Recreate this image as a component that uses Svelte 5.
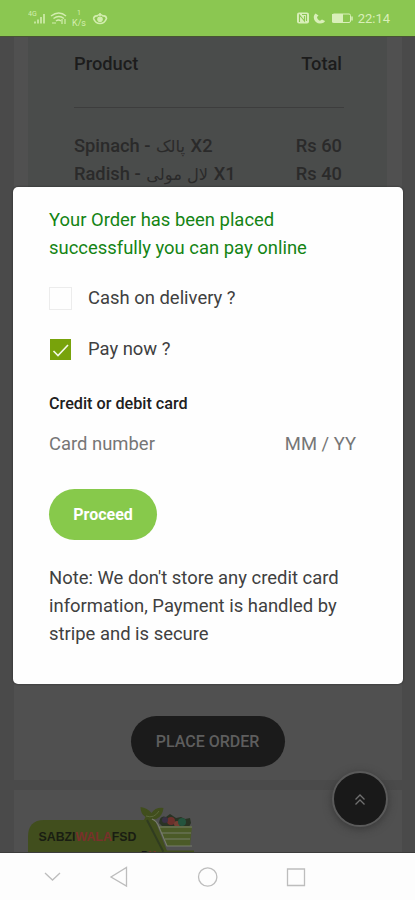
<script>
  const items = [
    { name: 'Spinach', local: 'پالک', qty: 'X2', total: 'Rs 60' },
    { name: 'Radish', local: 'لال مولی', qty: 'X1', total: 'Rs 40' }
  ];
  let method = $state('card');
</script>

<div class="phone">
  <header class="status">
    <svg class="signals" width="82" height="20" viewBox="0 0 82 20" fill="none" stroke="#d3edaf" stroke-width="1.2">
      <text x="0" y="8" class="net">4G</text>
      <path d="M7 15.500v-2M10 15.500v-4M13 15.500V9M16 15.500V6" stroke-width="1.600" />
      <path d="M23 8q8-6 15 0M25.500 10.500q5.500-4 10.500 0M28 13q2.500-2 5 0" stroke-width="1.500" />
      <path d="M24 15h4M34 11v5M37 16v-5" />
      <text x="49" y="7" class="net">1</text>
      <text x="44" y="18" class="rate">K/s</text>
      <path d="M65.500 10.500q1-3 3.500-2.500q3-3 6 0q3-.500 3.500 2.500q-2 5-6.500 5t-6.500-5M72 5v3" stroke-width="1.600" />
      <circle cx="72" cy="11.200" r="2.200" fill="#d3edaf" />
    </svg>
    <div class="right">
      <svg width="57" height="14" viewBox="0 0 57 14">
        <rect x="0" y="1.500" width="12" height="11" rx="2" fill="#d9efb9" />
        <path d="M2.500 11V4l5 6V5M5 3.500h4.500V10" fill="none" stroke="#8bc751" stroke-width="1.100" />
        <path d="M18.500 2.500C15 5 17 12.500 23 12.500c3 0 4.500-1 5-2.500l-3-1.500-2 1.300C21.500 9.500 20 7.500 20 6l1.500-1.500Z" fill="#d9efb9" />
        <rect x="35.500" y="3" width="18" height="8.500" rx="1.500" fill="none" stroke="#d9efb9" />
        <rect x="35" y="3" width="11" height="8.500" fill="#d9efb9" />
        <path d="M55 5.500v4" stroke="#d9efb9" stroke-width="1.500" />
      </svg>
      <span>22:14</span>
    </div>
  </header>

  <main class="page">
    <section class="order">
      <div class="summary">
        <div class="row head"><span>Product</span><span>Total</span></div>
        <hr />
        {#each items as item}
          <div class="row"><span>{item.name} - <bdi class="urdu">{item.local}</bdi> {item.qty}</span><span>{item.total}</span></div>
        {/each}
      </div>
      <button class="place">PLACE ORDER</button>
    </section>

    <section class="brand">
      <svg width="172" height="50" viewBox="0 0 172 50">
        <path d="M0 50V31Q0 14 16 14H127L141 50Z" fill="#414e1d" />
        <text x="10.500" y="35" class="logo" textLength="98" lengthAdjust="spacingAndGlyphs">SABZI<tspan fill="#79302b">WALA</tspan>FSD</text>
        <path d="M112.500 1q7 1 11 6q4-6 12-5q-1 8-7 11l-13 2 2-4q-5-3-5-10Z" fill="#414e1d" />
        <path d="M118 10q8 3 13-5" fill="none" stroke="#5b683b" />
        <path d="M131 17q1-8 7-6l4-3 6 4 5-1 4 2 5-1 1 5-2 4h-26Z" fill="#293324" />
        <circle cx="143" cy="15" r="4" fill="#6c302b" /><circle cx="149" cy="18" r="3" fill="#743f32" />
        <circle cx="154" cy="16" r="4" fill="#24533d" /><circle cx="137" cy="14" r="3" fill="#383044" />
        <path d="M130 20h34l-2 20h-23Z" fill="#4b5a27" />
        <path d="M124 13q5 2 7 8l8 19h25M131 21h33M134 27h29M137 33h25" fill="none" stroke="#777d6b" stroke-width="1.200" />
        <path d="M119 14l17 33" stroke="#303c20" stroke-width="2" />
        <path d="M112 50v-2h54v2Z" fill="#505050" />
        <path d="M133 50v-2q2-3.500 6-3.500h27V50Z" fill="#414e1d" />
        <text x="113" y="53" class="pk">P<tspan fill="#79302b">K</tspan></text>
      </svg>
    </section>

    <button class="top" aria-label="Back to top">
      <svg width="12" height="13" viewBox="0 0 12 13" fill="none" stroke="#707070" stroke-width="1.300"><path d="M1.500 6.500 6 2l4.500 4.500M1.500 11.500 6 7l4.500 4.500" /></svg>
    </button>

    <div class="dialog" role="dialog">
      <p class="success">Your Order has been placed<br />successfully you can pay online</p>
      <label class="option">
        <input type="radio" bind:group={method} value="cash" /><i class="box"></i><span>Cash on delivery ?</span>
      </label>
      <label class="option">
        <input type="radio" bind:group={method} value="card" />
        <i class="box on"><svg width="21" height="21" viewBox="0 0 21 21" fill="none" stroke="#f4faea" stroke-width="1.600"><path d="M3.500 12 8 16.500 18 6" /></svg></i>
        <span class="pay">Pay now ?</span>
      </label>
      <h2>Credit or debit card</h2>
      <div class="card"><span class="number">Card number</span><span class="expiry">MM / YY</span></div>
      <button class="proceed">Proceed</button>
      <p class="note">Note: We don't store any credit card<br />information, Payment is handled by<br />stripe and is secure</p>
    </div>
  </main>

  <nav class="nav">
    <svg width="415" height="47" viewBox="0 0 415 47" fill="none" stroke="#bdbdbd" stroke-width="1.300">
      <path d="m45 20 7.500 7L60 20M126.500 14.500v18.500L111 24ZM287.500 16h17v16.500h-17Z" />
      <circle cx="207.700" cy="24" r="9.200" />
    </svg>
  </nav>
</div>

<style>
  :global(body) { margin: 0; }
  * { box-sizing: border-box; }
  .phone { width: 415px; height: 900px; display: flex; flex-direction: column; overflow: hidden; font-family: Roboto, "DejaVu Sans", sans-serif; background: #4a4a4a; }
  button { border: 0; padding: 0; font: inherit; }
  .status { height: 36px; flex: none; background: #8bc751; display: flex; justify-content: space-between; align-items: center; padding: 0 25px 0 28px; color: #d9efb9; }
  .status text { fill: #d3edaf; stroke: none; }
  .net { font-size: 7px; }
  .rate { font-size: 9px; }
  .right { display: flex; align-items: center; gap: 4px; font-size: 13px; }
  .page { position: relative; height: 817px; flex: none; overflow: hidden; padding: 0 13px 0 14px; border-top: 1px solid #485433; border-bottom: 1px solid #3c3c3c; }
  .order { height: 743px; background: #505050; padding: 0 15px 0 14px; display: flex; flex-direction: column; align-items: center; }
  .summary { width: 100%; height: 640px; background: #4a4c4b; padding: 13px 45px 0 46px; color: #2a2a2a; font-size: 18.300px; font-weight: 500; line-height: 28px; }
  .row { display: flex; justify-content: space-between; }
  .row span:first-child { white-space: nowrap; }
  .head { color: #1c1c1c; }
  .summary hr { border: 0; height: 1px; background: #3d3d3d; margin: 29px -2px 24px 0; }
  .urdu { font-family: "DejaVu Sans", sans-serif; font-weight: 400; font-size: 16.300px; line-height: 1; margin: 0 1px; }
  .place { margin-top: 39px; flex: none; width: 154px; height: 51px; border-radius: 26px; background: #1b1b1b; color: #5e5e5e; font-size: 16px; font-weight: 500; }
  .brand { margin-top: 10px; height: 80px; background: #505050; padding: 16px 14px; }
  .logo { font: 700 12.500px "Liberation Sans", Arial, sans-serif; fill: #191d12; }
  .pk { font: 700 11px "Liberation Sans", Arial, sans-serif; fill: #171717; }
  .top { position: absolute; left: 332px; top: 734px; width: 56px; height: 56px; border-radius: 50%; border: 2px solid #5a5a5a; background: #191919; display: grid; place-items: center; box-shadow: 0 2px 8px #383838; }
  .dialog { position: absolute; left: 13px; top: 150px; width: 390px; height: 497px; border-radius: 5px; background: #fefefe; padding: 19px 36px 0; box-shadow: 0 0 2px #222; color: #404040; font-size: 18.430px; line-height: 28px; }
  p { margin: 0; white-space: nowrap; }
  .success { color: #148414; }
  .option { display: flex; align-items: center; height: 28px; margin-top: 22px; gap: 16px; }
  .option + .option { margin-top: 23px; }
  .option input { position: absolute; opacity: 0; pointer-events: none; }
  .box { width: 23px; height: 23px; border: 1px solid #ececec; display: grid; place-items: center; flex: none; }
  .on { background: #78a30b; border: 1px solid #fefefe; }
  h2 { margin: 27px 0 0; font-size: 16.200px; font-weight: 500; line-height: 28px; color: #202020; }
  .card { display: flex; justify-content: space-between; margin-top: 12px; padding-right: 11px; color: #767676; }
  .proceed { display: block; width: 108px; height: 51px; margin-top: 31px; border-radius: 26px; background: #87c94b; color: #fff; font-size: 16px; font-weight: 700; }
  .note { margin-top: 24px; }
  .nav { height: 47px; flex: none; background: #fdfdfd; }
  .nav svg { display: block; }
</style>
